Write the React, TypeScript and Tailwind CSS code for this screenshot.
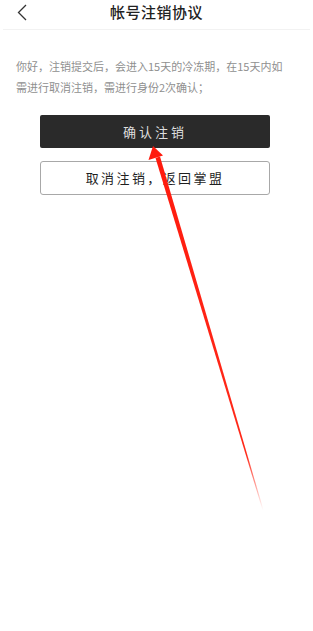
import React from 'react';

const App: React.FC = () => {
  return (
    <div
      className="relative w-[313px] h-[631px] bg-white overflow-hidden"
      style={{ fontFamily: '"Noto Sans CJK SC", "Noto Sans", sans-serif' }}
    >
      {/* Header */}
      <div className="relative h-[30px] flex items-center justify-center border-b border-[#f2f2f2] mx-[3px]">
        <svg className="absolute left-[13px] top-[4px]" width="12" height="17" viewBox="0 0 12 17" fill="none">
          <path d="M10 1 L2.5 8.5 L10 16" stroke="#333" strokeWidth="1.3" />
        </svg>
        <h1 className="text-[15px] font-medium text-[#222] tracking-[0.5px] -mt-[4px]">帐号注销协议</h1>
      </div>

      {/* Notice */}
      <p className="px-4 pt-[26px] text-[11px] leading-[21px] text-[#8f8f8f]">
        你好，注销提交后，会进入15天的冷冻期，在15天内如
        <br />
        需进行取消注销，需进行身份2次确认；
      </p>

      {/* Actions */}
      <div className="flex flex-col mt-[17px] gap-[13px] pl-[40px]">
        <button className="w-[230px] h-[33px] bg-[#2a2a2a] rounded-[2px] text-[13px] text-[#dedede] tracking-[3px]">
          确认注销
        </button>
        <button className="w-[230px] h-[34px] bg-white border border-[#a8a8a8] rounded-[3px] text-[13px] text-[#1f1f1f] tracking-[2.4px]">
          取消注销，返回掌盟
        </button>
      </div>

      {/* Red annotation arrow */}
      <svg className="absolute inset-0 pointer-events-none" width="313" height="631" viewBox="0 0 313 631">
        <defs>
          <linearGradient id="fade" x1="153" y1="147" x2="263" y2="510" gradientUnits="userSpaceOnUse">
            <stop offset="0" stopColor="#ff1a0d" />
            <stop offset="0.85" stopColor="#ff2a1a" />
            <stop offset="1" stopColor="#ff2a1a" stopOpacity="0" />
          </linearGradient>
        </defs>
        <polygon points="155.5,158 160,156.5 263.5,510 262.5,510" fill="url(#fade)" />
        <polygon points="153,146 148.5,160 163,155.5" fill="#ff1a0d" />
      </svg>
    </div>
  );
};

export default App;
